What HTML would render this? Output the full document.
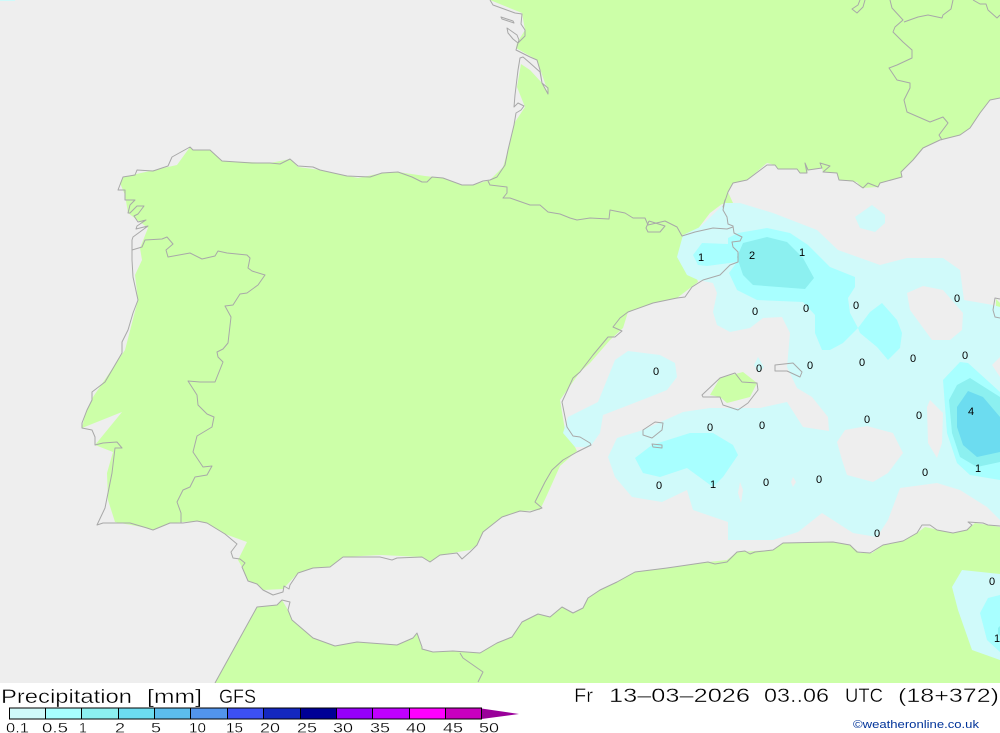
<!DOCTYPE html>
<html lang="en">
<head>
<meta charset="utf-8">
<title>Precipitation GFS</title>
<style>
html,body{margin:0;padding:0;background:#fff;width:1000px;height:733px;overflow:hidden}
svg{display:block}
.c{fill:none;stroke:#a8a8a8;stroke-width:1;stroke-linejoin:round}
.l{font:11px "Liberation Sans",sans-serif;fill:#000;text-anchor:middle}
.t{font-family:"Liberation Sans",sans-serif;font-size:19px;fill:#000;stroke:#fff;stroke-width:.35px}
.n{font-family:"Liberation Sans",sans-serif;font-size:14px;fill:#000;stroke:#fff;stroke-width:.25px}
</style>
</head>
<body>
<svg width="1000" height="733" viewBox="0 0 1000 733" xmlns="http://www.w3.org/2000/svg">
<rect width="1000" height="733" fill="#fff"/>
<rect width="1000" height="683" fill="#eeeeee"/>
<rect x="0" y="0" width="15" height="1" fill="#d0fafa"/>

<!-- land -->
<g fill="#ccffa8">
<path d="M490 0L512 9L522 13L525 30L517 43L516 48L537 60L548 92L542 83L530 70L521 64L517 87L525 107L515 122L508 150L503 167L490 180L473 185L462 185L443 178L425 176L398 172L382 173L358 178L320 170L298 167L290 159L270 163L222 161L210 150L193 150L190 147L177 165L123 177L120 183L125 195L128 213L148 228L140 248L142 260L135 275L138 300L132 323L125 350L93 397L85 415L82 428L122 412L95 445L113 452L107 473L108 500L115 522L147 528L153 530L170 523L197 521L207 523L225 534L247 542L238 560L242 567L248 581L257 584L263 590L283 589L298 573L313 568L330 567L343 557L380 555L422 557L430 562L440 555L470 550L477 545L483 532L502 517L520 511L540 510L547 495L560 466L577 451L574 445L565 430L560 400L580 372L590 363L610 340L623 328L628 312L653 303L677 298L698 282L683 235L697 230L710 213L722 204L733 203L728 192L733 183L747 180L767 163L775 165L778 169L797 169L800 173L807 173L808 170L822 168L823 172L837 173L839 180L857 182L862 188L878 187L880 183L902 177L901 172L913 160L923 148L940 140L960 135L970 128L980 113L990 100L1000 98L1000 0Z"/>
<path d="M215 683L257 607L277 605L282 600L288 610L292 620L313 638L335 646L357 642L397 645L413 638L417 633L422 649L433 652L453 651L480 653L497 643L512 637L522 622L538 614L550 617L562 607L573 613L583 608L588 598L600 590L617 582L635 572L667 568L708 562L727 560L737 552L773 550L783 543L833 542L850 545L860 553L872 553L883 545L903 541L917 533L925 527L953 533L967 530L975 523L988 525L1000 527L1000 683Z"/>
<path d="M710 395L720 378L743 372L757 383L750 397L727 403L720 397Z"/>
<path d="M996 299L1000 303L1000 310L996 312Z"/>
</g>

<!-- precipitation -->
<path fill="#d0fafa" fill-rule="evenodd" d="M725 203L740 203L773 213L817 230L838 250L880 265L907 258L943 258L960 270L964 300L993 305L1000 307L1000 357L992 365L1000 377L1000 520L987 507L960 490L937 483L900 488L888 520L877 537L853 533L822 513L798 532L773 540L728 540L728 522L693 510L687 490L662 502L632 497L615 477L608 457L617 438L643 430L683 412L710 408L760 408L787 402L803 427L829 431L828 417L812 397L797 388L787 367L790 333L782 317L763 318L750 328L730 332L717 325L713 312L717 293L713 283L698 280L687 275L677 257L683 235L700 227Z
M907 293L923 286L943 290L963 313L962 330L950 340L932 340L910 310Z
M837 442L845 430L867 426L893 433L903 453L888 473L873 482L847 475L842 460Z
M927 407L930 400L943 413L942 443L937 458L928 443Z
M740 482L743 490L741 503L738 493Z
M793 477L796 482L793 487L791 482Z"/>
<path fill="#d0fafa" d="M628 351L660 355L675 363L677 377L667 390L647 398L603 415L600 433L590 447L575 447L563 433L568 417L598 402L615 360Z"/>
<path fill="#d0fafa" d="M758 357L764 367L759 373L754 365Z"/>
<path fill="#d0fafa" d="M855 217L872 205L885 215L885 223L875 232L860 228Z"/>
<path fill="#d0fafa" d="M952 587L962 570L1000 574L1000 660L972 650L958 610Z"/>

<g fill="#a8ffff">
<path d="M693 255L702 243L728 244L728 238L738 233L767 228L790 233L808 245L830 267L855 277L855 287L848 298L850 313L858 328L843 343L830 350L822 350L815 333L815 315L803 302L757 300L737 290L729 273L737 262L707 266L698 265Z"/>
<path d="M858 328L870 312L882 303L897 320L902 333L900 348L888 360L877 347L860 333Z"/>
<path d="M635 458L652 445L690 433L713 433L733 445L738 455L723 477L713 487L687 468L660 477L643 473Z"/>
<path d="M943 380L960 362L968 363L1000 392L1000 480L970 475L957 463L947 433Z"/>
<path d="M1000 595L988 598L980 613L987 640L1000 652Z"/>
</g>
<g fill="#8cf0f0">
<path d="M737 257L743 243L767 237L787 242L803 258L814 278L805 289L753 285L743 275Z"/>
<path d="M949 400L957 385L970 378L1000 397L1000 462L977 467L960 457L952 433Z"/>
</g>
<path fill="#6cdcf0" d="M957 407L968 391L983 397L1000 417L1000 452L977 457L963 445L957 427Z"/>
<path fill="#8cf0f0" d="M998 628L1000 626L1000 636L998 634Z"/>

<!-- coastlines -->
<g class="c">
<path d="M490 0L493 5L515 13L522 14L521 24L525 30L525 36L518 43L516 50L530 57L537 60L540 70L542 83L548 88L548 94L542 83L540 72L530 63L523 57L520 58L518 70L515 95L514 107L518 103L524 106L521 110L516 113L514 125L508 150L505 165L497 177L490 180L483 181L473 185L462 185L443 178L432 177L427 182L422 182L412 177L398 172L382 173L370 177L347 176L320 170L313 167L298 166L290 159L280 164L270 163L252 163L222 161L210 150L193 150L190 147L172 157L168 166L153 171L137 170L135 175L123 177L118 190L125 190L125 200L135 200L130 205L128 213L130 213L137 206L144 206L138 214L134 216L138 222L146 220L137 226L136 229L148 226L133 237L132 240L132 260L133 277L138 300L133 313L128 330L122 342L122 353L105 382L92 392L92 400L87 410L82 423L82 428L92 430L95 437L95 445L103 443L117 442L122 448L115 448L112 473L105 508L97 525L103 523L130 523L147 528L153 530L170 523L183 523L197 521L207 523L225 534L237 544L231 552L233 558L240 559L245 563L242 567L248 581L257 584L263 590L273 595L283 592L284 586L289 589L290 585L298 573L313 568L330 567L343 557L380 557L392 560L397 558L422 557L430 562L440 555L457 553L462 559L470 552L477 545L483 532L502 517L520 511L530 512L542 508L535 502L545 482L552 470L563 460L577 452L591 445L590 443L580 437L573 436L567 427L565 417L562 402L573 378L580 372L593 355L603 343L608 337L615 337L622 331L613 327L620 318L628 312L653 303L677 298L685 297L692 287L703 280L720 275L730 265L738 262L738 252L733 247L732 242L740 241L742 237L734 233L733 226L728 224L727 217L723 210L725 200L723 207L728 192L733 183L747 180L767 165L775 165L778 169L797 169L800 173L807 173L805 163L808 170L822 168L820 163L830 166L823 172L837 173L839 180L853 181L863 188L868 183L878 187L880 183L902 177L901 172L913 160L923 148L940 140L960 135L970 128L980 113L990 100L1000 98"/>
<path d="M488 181L490 185L507 187L507 193L503 198L510 198L530 205L540 205L548 212L560 214L570 218L577 220L590 218L609 219L610 210L625 213L633 218L645 218L648 225L665 221L677 227L682 236L695 232L713 228L727 229L733 227"/>
<path d="M649 221L646 228L648 232L660 232L665 226L649 221"/>
<path d="M132 250L142 247L145 240L162 239L167 237L173 244L166 250L168 257L190 253L202 259L215 256L218 251L227 253L247 255L250 258L248 268L252 271L265 275L258 285L247 293L240 294L233 305L225 306L231 317L228 343L223 349L217 352L218 357L223 362L215 382L200 382L188 381L197 395L198 405L207 414L214 417L212 427L197 436L193 452L203 467L212 466L207 475L195 477L190 487L183 490L177 502L181 513L181 523"/>
<path d="M501 17L513 21L514 23L502 19Z"/>
<path d="M507 28L517 35L519 40L518 43L513 39L508 33Z"/>
<path d="M865 0L863 7L857 13L852 9L858 5L860 0"/>
<path d="M890 0L892 8L903 20L895 27L893 32L903 42L912 50L912 58L897 65L889 68L897 80L910 83L910 88L904 100L907 112L930 122L943 117L948 123L939 135L942 140"/>
<path d="M904 22L918 17L928 15L942 18L943 15L951 9L953 0"/>
<path d="M973 0L980 4L986 4L988 10L997 18L1000 15"/>
<path d="M215 683L257 607L277 605L282 600L290 602L288 610L292 620L313 638L335 646L357 642L397 645L413 638L417 633L422 647L422 649L433 652L453 651L480 653L497 643L512 637L522 622L538 614L550 617L562 607L573 613L583 608L588 598L600 590L617 582L635 572L667 568L708 562L715 564L727 562L737 552L745 551L750 554L755 552L773 550L783 543L833 542L850 545L857 552L870 553L883 545L903 541L917 533L922 525L930 525L937 530L953 533L967 530L972 525L968 522L983 523L988 525L1000 526"/>
<path d="M460 653L463 658L483 672L478 682"/>
<path d="M702 395L720 378L735 373L742 382L757 383L758 390L748 403L738 410L723 405L720 397L703 397Z"/>
<path d="M775 365L793 363L802 372L800 377L787 371L775 371Z"/>
<path d="M643 430L655 422L663 423L662 430L652 438L643 435Z"/>
<path d="M652 444L662 445L662 448L653 447Z"/>
<path d="M1000 299L995 298L993 310L995 317L1000 318"/>
</g>

<!-- contour labels -->
<g class="l">
<text x="701" y="261">1</text><text x="752" y="259">2</text><text x="802" y="256">1</text>
<text x="755" y="315">0</text><text x="806" y="312">0</text><text x="856" y="309">0</text><text x="957" y="302">0</text>
<text x="656" y="375">0</text><text x="759" y="372">0</text><text x="810" y="369">0</text><text x="862" y="366">0</text><text x="913" y="362">0</text><text x="965" y="359">0</text>
<text x="971" y="415">4</text>
<text x="710" y="431">0</text><text x="762" y="429">0</text><text x="867" y="423">0</text><text x="919" y="419">0</text>
<text x="925" y="476">0</text><text x="978" y="472">1</text>
<text x="659" y="489">0</text><text x="713" y="488">1</text><text x="766" y="486">0</text><text x="819" y="483">0</text>
<text x="877" y="537">0</text><text x="992" y="585">0</text><text x="997" y="642">1</text>
</g>

<rect x="0" y="683" width="1000" height="50" fill="#fff"/>

<!-- header -->
<g class="t">
<text x="1" y="703" textLength="131" lengthAdjust="spacingAndGlyphs">Precipitation</text>
<text x="147" y="703" textLength="55" lengthAdjust="spacingAndGlyphs">[mm]</text>
<text x="219" y="703" textLength="37" lengthAdjust="spacingAndGlyphs">GFS</text>
<text x="574" y="702" textLength="19" lengthAdjust="spacingAndGlyphs">Fr</text>
<text x="609" y="702" textLength="141" lengthAdjust="spacingAndGlyphs">13–03–2026</text>
<text x="764" y="702" textLength="65" lengthAdjust="spacingAndGlyphs">03..06</text>
<text x="845" y="702" textLength="38" lengthAdjust="spacingAndGlyphs">UTC</text>
<text x="898" y="702" textLength="101" lengthAdjust="spacingAndGlyphs">(18+372)</text>
</g>

<!-- colour bar -->
<g>
<rect x="9.5" y="708" width="36" height="11" fill="#d0fafa"/>
<rect x="45.5" y="708" width="36" height="11" fill="#a8ffff"/>
<rect x="81.5" y="708" width="37" height="11" fill="#8cf0f0"/>
<rect x="118.5" y="708" width="36" height="11" fill="#6cdcf0"/>
<rect x="154.5" y="708" width="36" height="11" fill="#5cbcec"/>
<rect x="190.5" y="708" width="37" height="11" fill="#5294ec"/>
<rect x="227.5" y="708" width="36" height="11" fill="#3c50f4"/>
<rect x="263.5" y="708" width="37" height="11" fill="#1428c0"/>
<rect x="300.5" y="708" width="36" height="11" fill="#000096"/>
<rect x="336.5" y="708" width="36" height="11" fill="#9600fa"/>
<rect x="372.5" y="708" width="37" height="11" fill="#c000ff"/>
<rect x="409.5" y="708" width="36" height="11" fill="#ff00ff"/>
<rect x="445.5" y="708" width="36" height="11" fill="#c800c0"/>
<path d="M481.5 708.500L519 714L481.500 719Z" fill="#9a009a"/>
<path d="M9.500 708H481.500V719H9.500ZM45.500 708V719M81.500 708V719M118.500 708V719M154.500 708V719M190.500 708V719M227.500 708V719M263.500 708V719M300.500 708V719M336.500 708V719M372.500 708V719M409.500 708V719M445.500 708V719" fill="none" stroke="#000" stroke-width="1"/>
</g>
<g class="n">
<text x="6" y="732.500" textLength="23" lengthAdjust="spacingAndGlyphs">0.1</text>
<text x="42" y="732.500" textLength="26" lengthAdjust="spacingAndGlyphs">0.5</text>
<text x="79" y="732.500">1</text>
<text x="115" y="732.500" textLength="10" lengthAdjust="spacingAndGlyphs">2</text>
<text x="151" y="732.500" textLength="10" lengthAdjust="spacingAndGlyphs">5</text>
<text x="189" y="732.500" textLength="17" lengthAdjust="spacingAndGlyphs">10</text>
<text x="226" y="732.500" textLength="17" lengthAdjust="spacingAndGlyphs">15</text>
<text x="260" y="732.500" textLength="20" lengthAdjust="spacingAndGlyphs">20</text>
<text x="297" y="732.500" textLength="20" lengthAdjust="spacingAndGlyphs">25</text>
<text x="333" y="732.500" textLength="20" lengthAdjust="spacingAndGlyphs">30</text>
<text x="370" y="732.500" textLength="20" lengthAdjust="spacingAndGlyphs">35</text>
<text x="406" y="732.500" textLength="20" lengthAdjust="spacingAndGlyphs">40</text>
<text x="443" y="732.500" textLength="20" lengthAdjust="spacingAndGlyphs">45</text>
<text x="479" y="732.500" textLength="20" lengthAdjust="spacingAndGlyphs">50</text>
</g>
<text x="853" y="728" textLength="126" lengthAdjust="spacingAndGlyphs" style="font:11px 'Liberation Sans',sans-serif;fill:#003399">©weatheronline.co.uk</text>
</svg>
</body>
</html>
